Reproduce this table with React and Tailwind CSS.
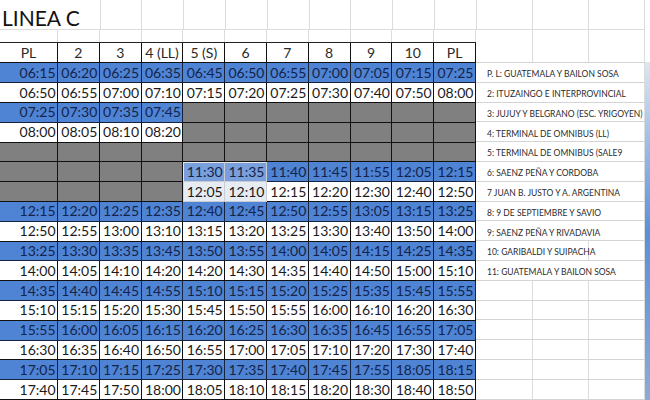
import React from "react";

const HEAD = ["PL", "2", "3", "4 (LL)", "5 (S)", "6", "7", "8", "9", "10", "PL"];

const G = null; // gray cell

const ROWS = [
  ["06:15", "06:20", "06:25", "06:35", "06:45", "06:50", "06:55", "07:00", "07:05", "07:15", "07:25"],
  ["06:50", "06:55", "07:00", "07:10", "07:15", "07:20", "07:25", "07:30", "07:40", "07:50", "08:00"],
  ["07:25", "07:30", "07:35", "07:45", G, G, G, G, G, G, G],
  ["08:00", "08:05", "08:10", "08:20", G, G, G, G, G, G, G],
  [G, G, G, G, G, G, G, G, G, G, G],
  [G, G, G, G, "11:30", "11:35", "11:40", "11:45", "11:55", "12:05", "12:15"],
  [G, G, G, G, "12:05", "12:10", "12:15", "12:20", "12:30", "12:40", "12:50"],
  ["12:15", "12:20", "12:25", "12:35", "12:40", "12:45", "12:50", "12:55", "13:05", "13:15", "13:25"],
  ["12:50", "12:55", "13:00", "13:10", "13:15", "13:20", "13:25", "13:30", "13:40", "13:50", "14:00"],
  ["13:25", "13:30", "13:35", "13:45", "13:50", "13:55", "14:00", "14:05", "14:15", "14:25", "14:35"],
  ["14:00", "14:05", "14:10", "14:20", "14:20", "14:30", "14:35", "14:40", "14:50", "15:00", "15:10"],
  ["14:35", "14:40", "14:45", "14:55", "15:10", "15:15", "15:20", "15:25", "15:35", "15:45", "15:55"],
  ["15:10", "15:15", "15:20", "15:30", "15:45", "15:50", "15:55", "16:00", "16:10", "16:20", "16:30"],
  ["15:55", "16:00", "16:05", "16:15", "16:20", "16:25", "16:30", "16:35", "16:45", "16:55", "17:05"],
  ["16:30", "16:35", "16:40", "16:50", "16:55", "17:00", "17:05", "17:10", "17:20", "17:30", "17:40"],
  ["17:05", "17:10", "17:15", "17:25", "17:30", "17:35", "17:40", "17:45", "17:55", "18:05", "18:15"],
  ["17:40", "17:45", "17:50", "18:00", "18:05", "18:10", "18:15", "18:20", "18:30", "18:40", "18:50"],
];

const LEGEND = [
  "P. L: GUATEMALA Y BAILON SOSA",
  "2: ITUZAINGO E INTERPROVINCIAL",
  "3: JUJUY Y BELGRANO (ESC. YRIGOYEN)",
  "4: TERMINAL DE OMNIBUS (LL)",
  "5: TERMINAL DE OMNIBUS (SALE9",
  "6: SAENZ PEÑA Y CORDOBA",
  "7 JUAN B. JUSTO Y A. ARGENTINA",
  "8: 9 DE SEPTIEMBRE Y SAVIO",
  "9: SAENZ PEÑA Y RIVADAVIA",
  "10: GARIBALDI Y SUIPACHA",
  "11: GUATEMALA Y BAILON SOSA",
];

// the all-gray row breaks the alternation, so parity flips after it
const isBlue = (r) => (r < 4 ? r % 2 === 0 : r % 2 === 1);

const cellClass = (r, c, v) => {
  const selected = (r === 5 || r === 6) && (c === 4 || c === 5);
  if (selected) {
    const bg = r === 5 ? "bg-[#79a0dc] text-[#14254a]" : "bg-[#e7ebf2] text-[#1a1a1a]";
    let edge = "";
    if (r === 5 && c === 4) edge = "shadow-[inset_1px_1px_0_#e4e4e4]";
    else if (r === 5) edge = "shadow-[inset_0_1px_0_#e4e4e4]";
    else if (c === 4) edge = "shadow-[inset_1px_0_0_#d8d8d8]";
    return `${bg} border-r border-b border-[#c9ccd2] ${edge}`;
  }
  if (v === null) return "bg-[#808080] border-r border-b border-[#111]";
  if (isBlue(r)) return "bg-[#4f83d4] text-[#13244a] border-r border-b border-[#16233f]";
  return "bg-white text-[#1b1b1b] border-r border-b border-[#111]";
};

const App = () => {
  return (
    <div className="w-[650px] h-[400px] overflow-hidden bg-white flex font-['Lato',sans-serif]">
      <div className="w-[476px] shrink-0 flex flex-col">
        {/* sheet rows above the table */}
        <div className="flex h-[30px] border-b border-[#dcdcdc]">
          <div className="w-[100.7px] shrink-0 border-r border-[#dcdcdc] flex items-end pl-[2px] pb-[1px] text-[21px] leading-none text-[#111] whitespace-nowrap">
            LINEA C
          </div>
          {Array.from({ length: 9 }).map((_, i) => (
            <div key={i} className="w-[41.8px] shrink-0 border-r border-[#dcdcdc]" />
          ))}
        </div>
        <div className="flex h-[13px]">
          <div className="w-[58px] shrink-0 border-r border-[#dcdcdc]" />
          {Array.from({ length: 10 }).map((_, i) => (
            <div key={i} className="w-[41.8px] shrink-0 border-r border-[#dcdcdc]" />
          ))}
        </div>

        <div className="grid grid-cols-[58px_repeat(10,41.8px)] border-t border-[#222]">
          {HEAD.map((h, i) => (
            <div
              key={i}
              className="h-[20px] flex items-center justify-center border-r border-b border-[#111] text-[14px] leading-none text-[#2a2a2a]"
            >
              {h}
            </div>
          ))}
          {ROWS.map((row, r) =>
            row.map((v, c) => (
              <div
                key={`${r}-${c}`}
                className={`h-[19.8px] flex items-center justify-end pr-[1.5px] text-[14px] leading-none ${cellClass(r, c, v)}`}
              >
                {v}
              </div>
            ))
          )}
        </div>
      </div>

      {/* legend */}
      <div className="w-[169px] shrink-0 flex flex-col">
        <div className="flex h-[30px] border-b border-[#dcdcdc]">
          <div className="w-[57px] border-r border-[#dcdcdc]" />
          <div className="w-[56px] border-r border-[#dcdcdc]" />
          <div className="w-[56px] border-r border-[#dcdcdc]" />
        </div>
        <div className="flex h-[33px] border-b border-[#d4d4d4]">
          <div className="w-[57px] border-r border-[#dcdcdc]" />
          <div className="w-[56px] border-r border-[#dcdcdc]" />
          <div className="w-[56px] border-r border-[#dcdcdc]" />
        </div>
        {LEGEND.map((t, i) => (
          <div key={i} className="flex h-[19.8px] border-b border-[#d4d4d4]">
            <div
              className={`${i === 9 ? "w-[113px]" : "w-[169px]"} border-r border-[#dcdcdc] flex items-end pl-[11px] pb-[3px] text-[8.5px] leading-none text-[#2b2b2b] whitespace-nowrap`}
            >
              {t}
            </div>
            {i === 9 && <div className="w-[56px] border-r border-[#dcdcdc]" />}
          </div>
        ))}
        {Array.from({ length: 6 }).map((_, i) => (
          <div key={i} className="flex h-[19.8px] border-b border-[#d4d4d4]">
            <div className="w-[57px] border-r border-[#dcdcdc]" />
            <div className="w-[56px] border-r border-[#dcdcdc]" />
            <div className="w-[56px] border-r border-[#dcdcdc]" />
          </div>
        ))}
      </div>

      {/* window edge */}
      <div className="w-[5px] shrink-0 flex flex-col">
        <div className="h-[62px] bg-white" />
        <div className="flex-1 bg-gradient-to-b from-[#dfe6ef] via-[#5d8fd6] to-[#8eaad3]" />
      </div>
    </div>
  );
};

export default App;
